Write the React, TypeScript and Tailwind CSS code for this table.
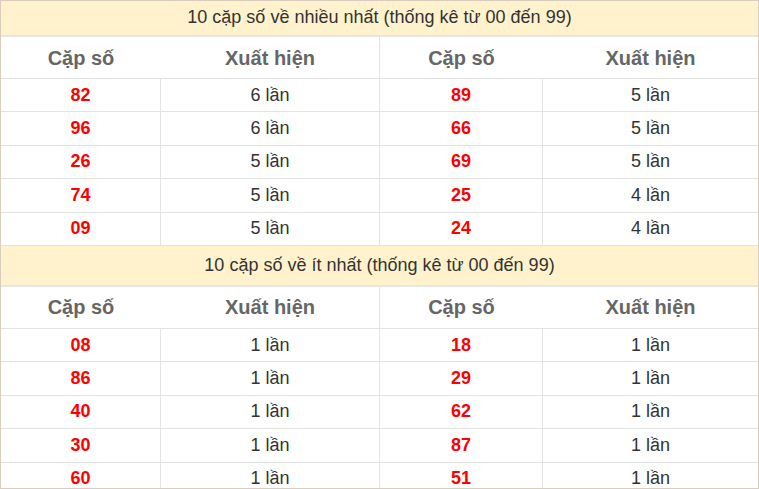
const most = [
  ["82", "6", "89", "5"],
  ["96", "6", "66", "5"],
  ["26", "5", "69", "5"],
  ["74", "5", "25", "4"],
  ["09", "5", "24", "4"],
];

const least = [
  ["08", "1", "18", "1"],
  ["86", "1", "29", "1"],
  ["40", "1", "62", "1"],
  ["30", "1", "87", "1"],
  ["60", "1", "51", "1"],
];

function HeaderRow() {
  return (
    <div className="flex h-[42px] border-b border-[#e3e3e3] text-[20px] font-bold text-[#666]">
      <div className="w-[160px] flex items-center justify-center">Cặp số</div>
      <div className="w-[219px] flex items-center justify-center border-r border-[#e3e3e3]">Xuất hiện</div>
      <div className="w-[163px] flex items-center justify-center">Cặp số</div>
      <div className="flex-1 flex items-center justify-center">Xuất hiện</div>
    </div>
  );
}

function DataRow({ row }: { row: string[] }) {
  return (
    <div className="flex h-[33.4px] shrink-0 border-b border-[#e3e3e3] text-[18px]">
      <div className="w-[160px] flex items-center justify-center border-r border-[#e3e3e3] font-bold text-[#ff0000]">
        {row[0]}
      </div>
      <div className="w-[219px] flex items-center justify-center border-r border-[#e3e3e3] text-[#333]">
        {row[1]} lần
      </div>
      <div className="w-[163px] flex items-center justify-center border-r border-[#e3e3e3] font-bold text-[#ff0000]">
        {row[2]}
      </div>
      <div className="flex-1 flex items-center justify-center text-[#333]">{row[3]} lần</div>
    </div>
  );
}

function Block({ title, rows, titleH }: { title: string; rows: string[][]; titleH: string }) {
  return (
    <div className="flex flex-col shrink-0">
      <div
        className={`${titleH} flex items-center justify-center bg-[#fff2cc] border-b-2 border-[#e6e6e6] text-[18px] text-[#333]`}
      >
        {title}
      </div>
      <HeaderRow />
      {rows.map((r) => (
        <DataRow key={r[0]} row={r} />
      ))}
    </div>
  );
}

export default function App() {
  return (
    <div
      className="w-[759px] h-[489px] overflow-hidden border border-[#d9cdbd] bg-white flex flex-col"
      style={{ fontFamily: '"Liberation Sans", Arial, sans-serif' }}
    >
      <Block title="10 cặp số về nhiều nhất (thống kê từ 00 đến 99)" rows={most} titleH="h-[36px] pb-[2px]" />
      <Block title="10 cặp số về ít nhất (thống kê từ 00 đến 99)" rows={least} titleH="h-[41px]" />
    </div>
  );
}
